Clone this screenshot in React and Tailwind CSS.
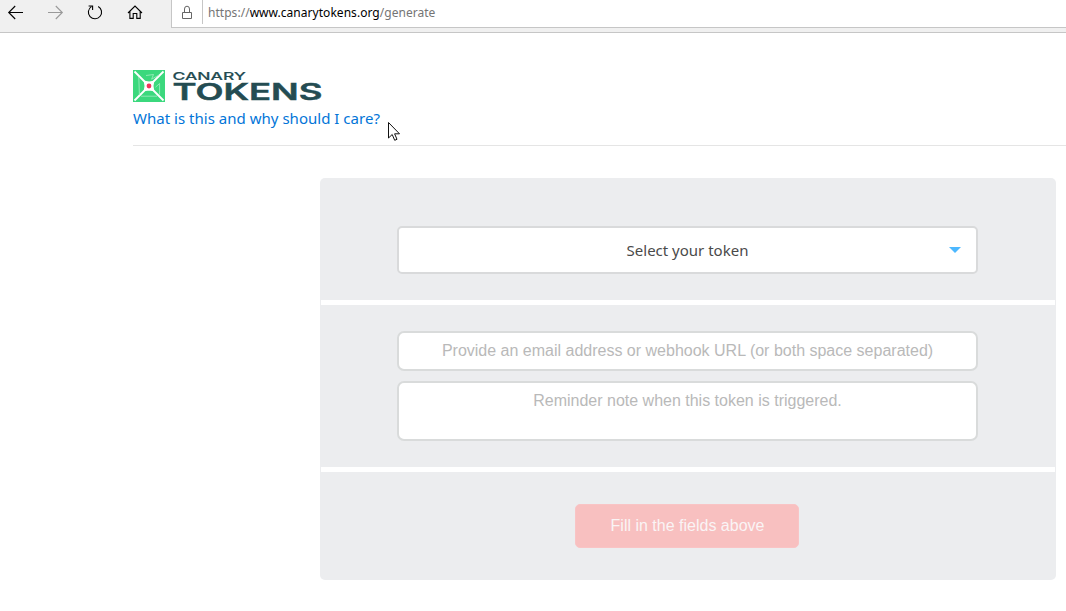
import React from "react";

function BrowserBar() {
  return (
    <header className="flex h-[33px] shrink-0 border-b border-[#c6c6c6] bg-[#f0f0f0]">
      <svg width="171" height="27" viewBox="0 0 171 27" fill="none" stroke="#000" strokeWidth="1.1" className="shrink-0">
        <path d="M23 12.5H8.5M15.2 6L8.7 12.5L15.2 19" />
        <path d="M48 12.5H62.5M55.8 6L62.3 12.5L55.8 19" stroke="#999" />
        <path d="M98.2 6.4A6.6 6.6 0 1 1 91.4 6.6M88.6 6H92.6V10" />
        <path d="M128 13L135 6L142 13M129.9 11.5V18.4H133.2V13.5H136.8V18.4H140.2V11.5" />
      </svg>
      <div className="flex h-7 grow border-b border-l border-[#c6c6c6] bg-white">
        <div className="flex h-6 w-[31px] border-r border-[#c6c6c6]">
          <svg width="30" height="24" viewBox="0 0 30 24" fill="none" stroke="#666" strokeWidth="1">
            <path d="M10.5 12.5H19.5V18.5H10.5ZM12.5 12.5V9A2.5 2.8 0 0 1 17.5 9V12.5" />
          </svg>
        </div>
        <div className="h-[25px] pl-[5px] font-['Noto_Sans',sans-serif] text-[12px] leading-[25px] whitespace-nowrap tracking-[0.035px] text-[#757575]">
          https://<span className="text-black">www.canarytokens.org</span>/generate
        </div>
      </div>
    </header>
  );
}

function Logo() {
  return (
    <svg width="192" height="36" viewBox="0 0 192 36" className="block overflow-visible" role="img" aria-label="Canary Tokens">
      <rect x="0" y="2" width="32" height="32" fill="#3bd87d" />
      <path d="M1.5 3.5L30.5 32.5M30.5 3.5L1.5 32.5" stroke="#fff" strokeWidth="1.8" />
      <g fill="none" stroke="#a5edc3" strokeWidth="0.8">
        <path d="M13 7.5L20.5 6.5L18.6 11.2L26 7" />
        <path d="M5.8 9L6.4 27M8 28.2H24M26.6 26.5V15.5L22.5 19.2" />
      </g>
      <path d="M11.5 13.5L16 14.2L20.5 13.5L19.8 18L20.5 22.5L16 21.8L11.5 22.5L12.2 18Z" fill="#fff" stroke="#fff" strokeWidth="1.4" />
      <circle cx="16" cy="18" r="2.4" fill="#f0345a" />
      <text x="39.5" y="11.7" textLength="73.5" lengthAdjust="spacingAndGlyphs" fill="#244c52" stroke="#244c52" strokeWidth="0.15" fontFamily="Inter, sans-serif" fontWeight="500" fontSize="11">CANARY</text>
      <text x="39.5" y="31.6" textLength="150" lengthAdjust="spacingAndGlyphs" fill="#244c52" stroke="#244c52" strokeWidth="0.45" fontFamily="Inter, sans-serif" fontWeight="600" fontSize="23">TOKENS</text>
    </svg>
  );
}

export default function App() {
  return (
    <div className="relative flex h-[611px] w-[1066px] flex-col overflow-hidden bg-white">
      <BrowserBar />
      <section className="ml-[133px] h-[113px] border-b border-[#e5e5e5] pt-[35px]">
        <Logo />
        <a className="mt-[2px] block font-['Noto_Sans',sans-serif] text-[15px] leading-6 whitespace-nowrap tracking-[0.02px] text-[#0275d8]">
          What is this and why should I care?
        </a>
      </section>
      <main className="mt-8 ml-80 flex h-[402px] w-[736px] flex-col rounded-[5px] bg-[#ecedef] font-['Liberation_Sans',Arial,sans-serif] text-[16px]">
        <div className="flex h-[122px] justify-center pt-12 pr-px">
          <div className="flex h-12 w-[581px] items-center rounded-[5px] border-2 border-[#d9dadb] bg-white pr-[15px] pl-[27px]">
            <span className="grow text-center font-['Noto_Sans',sans-serif] text-[15px] text-[#4a4a4a]">Select your token</span>
            <svg width="12" height="6" viewBox="0 0 12 6">
              <path d="M0 0H12L6 6Z" fill="#4db8ff" />
            </svg>
          </div>
        </div>
        <div className="mx-px h-[5px] bg-white" />
        <div className="flex h-[162px] flex-col items-center gap-2.5 pt-[26px] pr-px text-[#b9b9b9]">
          <div className="h-10 w-[581px] rounded-[7px] border-2 border-[#d9dbdb] bg-white text-center leading-[35px]">
            Provide an email address or webhook URL (or both space separated)
          </div>
          <div className="h-[60px] w-[581px] rounded-[7px] border-2 border-[#d9dbdb] bg-white text-center leading-[35px]">
            Reminder note when this token is triggered.
          </div>
        </div>
        <div className="mx-px h-[5px] bg-white" />
        <div className="flex justify-center pt-8 pr-0.5">
          <button className="h-11 w-56 rounded-[5px] border border-[#f9c4c5] bg-[#f8c0c0] pl-px leading-[42px] text-[#faf4f5]">
            Fill in the fields above
          </button>
        </div>
      </main>
      <svg width="13" height="20" viewBox="0 0 13 20" className="absolute top-[122px] left-[388px]">
        <path d="M0.5 0.5V16L4.2 12.5L6.7 18.3L9 17.3L6.6 11.8H11.5Z" fill="#fff" stroke="#111" />
      </svg>
    </div>
  );
}
